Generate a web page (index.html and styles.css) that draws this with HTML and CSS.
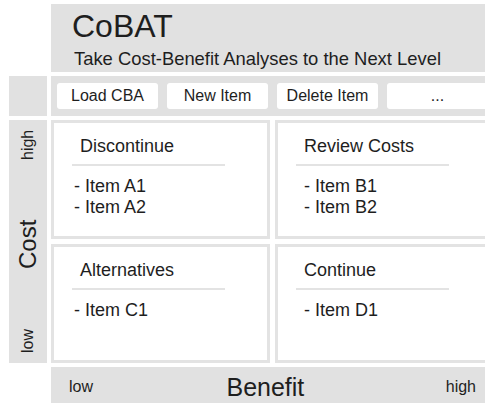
FILE: index.html
```html
<!DOCTYPE html>
<html lang="en">
<head>
<meta charset="utf-8">
<title>CoBAT</title>
<link rel="stylesheet" href="styles.css">
</head>
<body>
<div class="layout">
  <div class="corner"></div>
  <header class="header">
    <h1 class="title">CoBAT</h1>
    <p class="subtitle">Take Cost-Benefit Analyses to the Next Level</p>
  </header>

  <div class="side-block"></div>
  <nav class="toolbar">
    <button class="btn">Load CBA</button>
    <button class="btn">New Item</button>
    <button class="btn">Delete Item</button>
    <button class="btn">...</button>
  </nav>

  <div class="axis-y">
    <span class="axis-end">low</span>
    <span class="axis-name">Cost</span>
    <span class="axis-end">high</span>
  </div>
  <main class="matrix">
    <section class="quad quad-left">
      <h2 class="quad-title">Discontinue</h2>
      <ul class="items">
        <li>- Item A1</li>
        <li>- Item A2</li>
      </ul>
    </section>
    <section class="quad">
      <h2 class="quad-title">Review Costs</h2>
      <ul class="items">
        <li>- Item B1</li>
        <li>- Item B2</li>
      </ul>
    </section>
    <section class="quad quad-left">
      <h2 class="quad-title">Alternatives</h2>
      <ul class="items">
        <li>- Item C1</li>
      </ul>
    </section>
    <section class="quad">
      <h2 class="quad-title">Continue</h2>
      <ul class="items">
        <li>- Item D1</li>
      </ul>
    </section>
  </main>

  <div class="corner"></div>
  <div class="axis-x">
    <span class="axis-end">low</span>
    <span class="axis-name">Benefit</span>
    <span class="axis-end">high</span>
  </div>
</div>
</body>
</html>
```
FILE: styles.css
```css
html {
  overflow: hidden;
}

body {
  margin: 4px 0 0 9px;
  background: #ffffff;
  color: #1e1e1e;
  font-family: "Liberation Sans", Arial, Helvetica, sans-serif;
}

.layout {
  display: grid;
  grid-template-columns: 38px 443px;
  grid-template-rows: 68px 40px 243px 40px;
  column-gap: 4px;
  row-gap: 4px;
}

/* header */
.header {
  background: #e1e1e1;
  padding: 4px 0 0 21px;
}

.title {
  margin: 0;
  font-size: 32px;
  font-weight: normal;
  line-height: 37px;
}

.subtitle {
  margin: 3px 0 0 2px;
  font-size: 18.4px;
  line-height: 21px;
}

/* toolbar */
.side-block {
  background: #e1e1e1;
}

.toolbar {
  background: #e1e1e1;
  display: flex;
  gap: 9px;
  padding: 7px 6px;
  box-sizing: border-box;
}

.btn {
  flex: none;
  width: 101px;
  height: 26px;
  border: none;
  border-radius: 3px;
  background: #ffffff;
  color: #1e1e1e;
  font-family: inherit;
  font-size: 16px;
  padding: 0;
}

/* axes */
.axis-y {
  background: #e1e1e1;
  writing-mode: vertical-rl;
  transform: rotate(180deg);
  display: flex;
  justify-content: space-between;
  align-items: center;
  padding: 10px 0;
  box-sizing: border-box;
}

.axis-x {
  background: #e1e1e1;
  display: flex;
  justify-content: space-between;
  align-items: center;
  padding: 0 18px;
}

.axis-end {
  font-size: 16px;
}

.axis-name {
  font-size: 25px;
}

.axis-x .axis-name {
  margin-right: 8px;
}

.axis-y .axis-name {
  font-size: 24px;
}

/* quadrant matrix */
.matrix {
  display: grid;
  grid-template-columns: 1fr 1fr;
  grid-template-rows: 1fr 1fr;
  gap: 5px;
}

.quad {
  border: 3px solid #e3e3e3;
  padding-top: 13px;
}

.quad-title {
  margin: 0 0 0 18px;
  width: 153px;
  box-sizing: border-box;
  padding: 0 0 7px 8px;
  border-bottom: 2px solid #e3e3e3;
  font-size: 18px;
  font-weight: normal;
  line-height: 21px;
}

.items {
  list-style: none;
  margin: 10px 0 0;
  padding: 0 0 0 26px;
  font-size: 18px;
  line-height: 21px;
}

.quad-left .items {
  padding-left: 20px;
}
```
